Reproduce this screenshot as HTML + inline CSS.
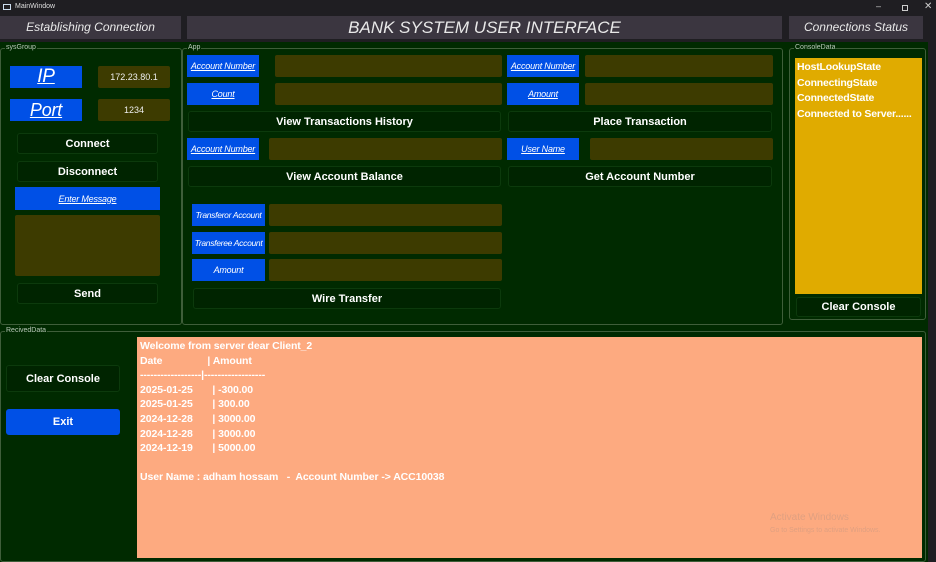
<!DOCTYPE html>
<html><head><meta charset="utf-8"><style>
*{margin:0;padding:0;box-sizing:border-box}
body{width:936px;height:562px;background:#1f1e22;position:relative;overflow:hidden;font-family:"Liberation Sans",sans-serif;color:#fff}
.a{position:absolute}
.hdr{background:#3b3640;color:#e8e8e8;font-style:italic;text-align:center}
.grp{border:1px solid #3f5e3a;border-radius:3px}
.gl{position:absolute;top:-6px;left:4px;font-size:7px;color:#b8c8b8;background:#002a00;padding:0 1px;line-height:10px}
.bb{position:absolute;background:#0050e6;color:#fff;font-style:italic;text-decoration:underline;font-size:9px;display:flex;align-items:center;justify-content:center;white-space:nowrap;letter-spacing:-0.2px}
.in{position:absolute;background:#3d3b00;border-radius:2px;font-size:9px;color:#eee;display:flex;align-items:center;justify-content:center}
.btn{position:absolute;background:#002400;border:1px solid #0c3a0c;border-radius:3px;font-weight:bold;font-size:11px;display:flex;align-items:center;justify-content:center}
</style></head><body>
<div class="a" style="left:0;top:0;width:936px;height:15px;background:#1f1e22"></div>
<div class="a" style="left:3px;top:4px;width:8px;height:6px;border:1px solid #cde"></div>
<div class="a" style="left:15px;top:3px;font-size:7px;color:#ddd">MainWindow</div>
<div class="a" style="left:876px;top:1px;font-size:9px;color:#ccc">–</div>
<div class="a" style="left:902px;top:5px;width:6px;height:6px;border:1px solid #ccc"></div>
<div class="a" style="left:924px;top:1px;font-size:10px;color:#ccc">✕</div>

<div class="a" style="left:0;top:42px;width:928px;height:520px;background:#002a00"></div>

<div class="a hdr" style="left:0;top:16px;width:181px;height:23px;font-size:12px;line-height:23px">Establishing Connection</div>
<div class="a hdr" style="left:187px;top:16px;width:595px;height:23px;font-size:17px;line-height:24px">BANK SYSTEM USER INTERFACE</div>
<div class="a hdr" style="left:789px;top:16px;width:134px;height:23px;font-size:12px;line-height:23px">Connections Status</div>

<div class="a grp" style="left:0;top:48px;width:182px;height:277px"><span class="gl">sysGroup</span></div>
<div class="a grp" style="left:182px;top:48px;width:601px;height:277px"><span class="gl">App</span></div>
<div class="a grp" style="left:789px;top:48px;width:137px;height:272px"><span class="gl">ConsoleData</span></div>
<div class="a grp" style="left:0;top:331px;width:926px;height:231px"><span class="gl">RecivedData</span></div>

<div class="bb" style="left:10px;top:66px;width:72px;height:22px;font-size:19px">IP</div>
<div class="in" style="left:98px;top:66px;width:72px;height:22px">172.23.80.1</div>
<div class="bb" style="left:10px;top:99px;width:72px;height:22px;font-size:18px">Port</div>
<div class="in" style="left:98px;top:99px;width:72px;height:22px">1234</div>
<div class="btn" style="left:17px;top:133px;width:141px;height:21px">Connect</div>
<div class="btn" style="left:17px;top:161px;width:141px;height:21px">Disconnect</div>
<div class="bb" style="left:15px;top:187px;width:145px;height:23px">Enter Message</div>
<div class="in" style="left:15px;top:215px;width:145px;height:61px"></div>
<div class="btn" style="left:17px;top:283px;width:141px;height:21px">Send</div>

<div class="bb" style="left:187px;top:55px;width:72px;height:22px">Account Number</div>
<div class="in" style="left:275px;top:55px;width:227px;height:22px"></div>
<div class="bb" style="left:507px;top:55px;width:72px;height:22px">Account Number</div>
<div class="in" style="left:585px;top:55px;width:188px;height:22px"></div>
<div class="bb" style="left:187px;top:83px;width:72px;height:22px">Count</div>
<div class="in" style="left:275px;top:83px;width:227px;height:22px"></div>
<div class="bb" style="left:507px;top:83px;width:72px;height:22px">Amount</div>
<div class="in" style="left:585px;top:83px;width:188px;height:22px"></div>
<div class="btn" style="left:188px;top:111px;width:313px;height:21px">View Transactions History</div>
<div class="btn" style="left:508px;top:111px;width:264px;height:21px">Place Transaction</div>
<div class="bb" style="left:187px;top:138px;width:72px;height:22px">Account Number</div>
<div class="in" style="left:269px;top:138px;width:233px;height:22px"></div>
<div class="bb" style="left:507px;top:138px;width:72px;height:22px">User Name</div>
<div class="in" style="left:590px;top:138px;width:183px;height:22px"></div>
<div class="btn" style="left:188px;top:166px;width:313px;height:21px">View Account Balance</div>
<div class="btn" style="left:508px;top:166px;width:264px;height:21px">Get Account Number</div>
<div class="bb" style="left:192px;top:204px;width:73px;height:22px;text-decoration:none;font-size:8.5px;letter-spacing:-0.3px">Transferor Account</div>
<div class="in" style="left:269px;top:204px;width:233px;height:22px"></div>
<div class="bb" style="left:192px;top:232px;width:73px;height:22px;text-decoration:none;font-size:8.5px;letter-spacing:-0.3px">Transferee Account</div>
<div class="in" style="left:269px;top:232px;width:233px;height:22px"></div>
<div class="bb" style="left:192px;top:259px;width:73px;height:22px;text-decoration:none">Amount</div>
<div class="in" style="left:269px;top:259px;width:233px;height:22px"></div>
<div class="btn" style="left:193px;top:288px;width:308px;height:21px">Wire Transfer</div>

<div class="a" style="left:795px;top:58px;width:127px;height:236px;background:#e0ab00;font-weight:bold;font-size:10.5px;line-height:15.5px;padding:2px 2px;white-space:nowrap;letter-spacing:-0.2px">HostLookupState<br>ConnectingState<br>ConnectedState<br>Connected to Server......</div>
<div class="btn" style="left:796px;top:297px;width:125px;height:20px">Clear Console</div>

<div class="btn" style="left:6px;top:365px;width:114px;height:27px">Clear Console</div>
<div class="btn" style="left:6px;top:409px;width:114px;height:26px;background:#0050e6;border-color:#0050e6">Exit</div>

<div class="a" style="left:137px;top:337px;width:785px;height:221px;background:#fdaa80;font-weight:bold;font-size:10.5px;line-height:14.6px;padding:2px 3px;white-space:pre;letter-spacing:-0.1px">Welcome from server dear Client_2
Date                | Amount
------------------|------------------
2025-01-25       | -300.00
2025-01-25       | 300.00
2024-12-28       | 3000.00
2024-12-28       | 3000.00
2024-12-19       | 5000.00

User Name : adham hossam   -  Account Number -&gt; ACC10038</div>
<div class="a" style="left:770px;top:512px;font-size:10px;color:#e0a080">Activate Windows</div>
<div class="a" style="left:770px;top:527px;font-size:7px;color:#e0a080">Go to Settings to activate Windows.</div>
</body></html>
